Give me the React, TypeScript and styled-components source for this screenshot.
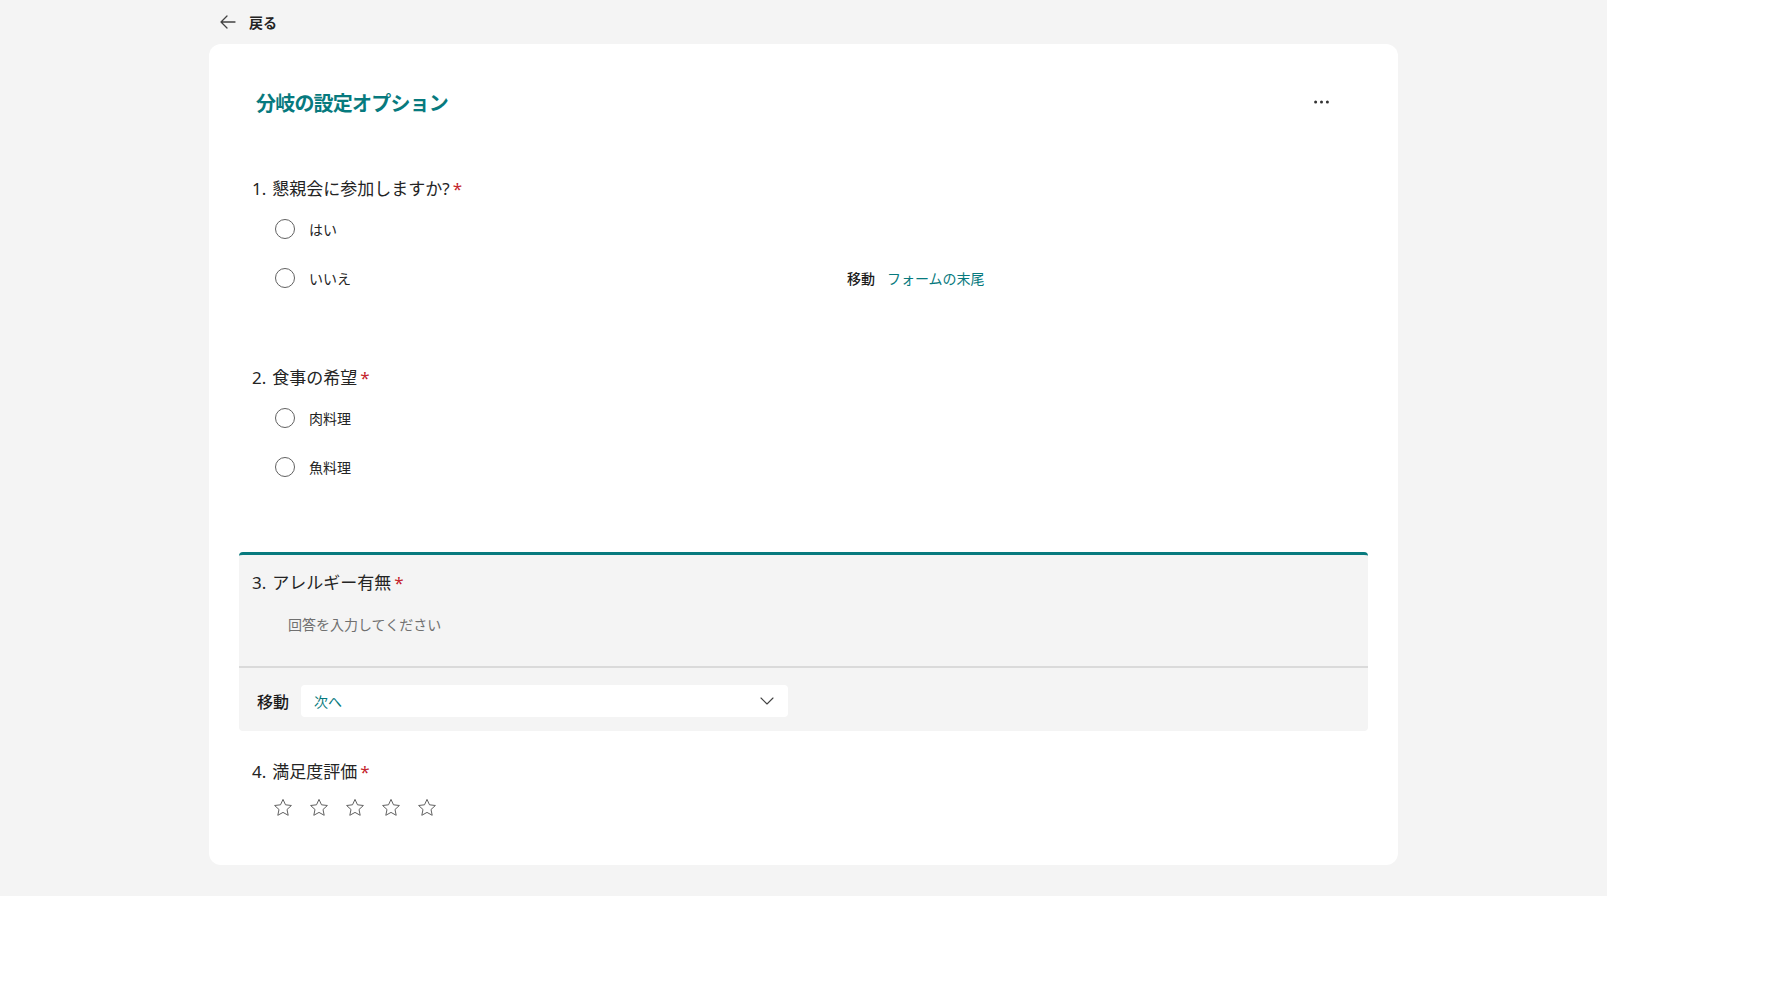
import React from 'react';
import styled, {createGlobalStyle} from 'styled-components';

const teal = '#077a7e';
const ink = '#242424';

const GlobalStyle = createGlobalStyle`
    html, body {
        margin: 0;
        padding: 0;
        background: #ffffff;
    }
    body {
        font-family: "Noto Sans", "Noto Sans CJK JP", sans-serif;
        color: ${ink};
    }
`;

const Page = styled.div`
    width: 1607px;
    background: #f4f4f4;
    padding-bottom: 31px;
`;

const Column = styled.div`
    width: 1189px;
    margin: 0 auto;
`;

const BackBar = styled.div`
    height: 44px;
    display: flex;
    align-items: center;
    gap: 13px;
    padding-left: 11px;
    font-size: 14px;
    font-weight: 700;
    color: ${ink};
`;

const Card = styled.div`
    background: #ffffff;
    border-radius: 12px;
    padding: 0 30px;
`;

const Header = styled.div`
    height: 36px;
    padding: 42px 39px 0 17px;
    margin-bottom: 36px;
    display: flex;
    align-items: center;
    justify-content: space-between;
`;

const Title = styled.h1`
    margin: 0;
    font-size: 20px;
    line-height: 36px;
    font-weight: 700;
    color: ${teal};
    letter-spacing: -0.8px;
`;

const Question = styled.div<{ $active?: boolean }>`
    border-top: 3px solid ${p => (p.$active ? teal : 'transparent')};
    border-radius: 4px;
    background: ${p => (p.$active ? '#f4f4f4' : 'transparent')};
    padding: ${p => (p.$active ? '0' : '16px 13px 49px')};
    margin: ${p => (p.$active ? '16px 0 10px' : '0')};
    &:last-child {
        padding-bottom: 45px;
    }
`;

const QuestionBody = styled.div`
    padding: 16px 13px 25px;
    border-bottom: 2px solid #dadada;
`;

const QTitle = styled.div`
    font-size: 17px;
    line-height: 24px;
    color: ${ink};
`;

const Num = styled.span`
    margin-right: 6px;
`;

const Required = styled.span`
    color: #c4262e;
    margin-left: 3px;
`;

const Options = styled.div`
    margin: 8px 0 0 23px;
    display: flex;
    flex-direction: column;
    gap: 9px;
`;

const OptionRow = styled.div`
    height: 40px;
    display: grid;
    grid-template-columns: 572px auto;
    align-items: center;
`;

const OptionLabel = styled.label`
    display: flex;
    align-items: center;
    gap: 14px;
    font-size: 14px;
    color: ${ink};
`;

const Radio = styled.span`
    width: 18px;
    height: 18px;
    border: 1px solid #616161;
    border-radius: 50%;
    background: #ffffff;
`;

const Branch = styled.div`
    display: flex;
    align-items: center;
    gap: 12px;
    font-size: 14px;
`;

const BranchLabel = styled.span`
    font-weight: 500;
    color: #1b1b1b;
`;

const BranchTarget = styled.span`
    color: ${teal};
`;

const TextInput = styled.div`
    margin: 12px 0 0 23px;
    height: 34px;
    padding-left: 13px;
    display: flex;
    align-items: center;
    font-size: 14px;
    color: #707070;
`;

const Footer = styled.div`
    padding: 17px 18px 14px;
    display: flex;
    align-items: center;
    gap: 12px;
`;

const Select = styled.div`
    width: 487px;
    height: 32px;
    box-sizing: border-box;
    padding: 0 14px 0 13px;
    background: #ffffff;
    border-radius: 4px;
    display: flex;
    align-items: center;
    justify-content: space-between;
    font-size: 14px;
    color: ${teal};
`;

const Stars = styled.div`
    margin: 12px 0 0 21px;
    height: 24px;
    display: flex;
    align-items: center;
    gap: 16px;
`;

const IconButton = styled.button`
    border: none;
    background: none;
    padding: 0;
    margin-bottom: 4px;
    display: flex;
    align-items: center;
    cursor: pointer;
`;

const BackArrow = () => (
    <svg width="16" height="14" viewBox="0 0 16 14" fill="none">
        <path d="M7 1L1 7l6 6M1 7h14" stroke="#424242" strokeWidth="1.3" strokeLinecap="round" strokeLinejoin="round"/>
    </svg>
);

const Dots = () => (
    <svg width="15" height="4" viewBox="0 0 15 4">
        <circle cx="1.6" cy="2" r="1.5" fill="#333"/>
        <circle cx="7.5" cy="2" r="1.5" fill="#333"/>
        <circle cx="13.4" cy="2" r="1.5" fill="#333"/>
    </svg>
);

const Chevron = () => (
    <svg width="14" height="8" viewBox="0 0 14 8" fill="none">
        <path d="M1 1l6 6 6-6" stroke="#424242" strokeWidth="1.1" strokeLinecap="round" strokeLinejoin="round"/>
    </svg>
);

const Star = () => (
    <svg width="20" height="20" viewBox="0 0 20 20" fill="none">
        <path
            d="M10 1.4l2.5 5.4 5.9.7-4.4 4 1.2 5.8L10 14.4l-5.2 2.9 1.2-5.8-4.4-4 5.9-.7z"
            stroke="#616161"
            strokeWidth="1"
            strokeLinejoin="round"
        />
    </svg>
);

type Option = { label: string; branch?: string };

const ChoiceQuestion: React.FC<{ no: number; title: string; options: Option[] }> = ({no, title, options}) => (
    <Question>
        <QTitle><Num>{no}.</Num>{title}<Required>*</Required></QTitle>
        <Options>
            {options.map(o => (
                <OptionRow key={o.label}>
                    <OptionLabel><Radio/>{o.label}</OptionLabel>
                    {o.branch && (
                        <Branch>
                            <BranchLabel>移動</BranchLabel>
                            <BranchTarget>{o.branch}</BranchTarget>
                        </Branch>
                    )}
                </OptionRow>
            ))}
        </Options>
    </Question>
);

export default function App() {
    return (
        <Page>
            <GlobalStyle/>
            <Column>
                <BackBar>
                    <BackArrow/>
                    <span>戻る</span>
                </BackBar>
                <Card>
                    <Header>
                        <Title>分岐の設定オプション</Title>
                        <IconButton aria-label="その他"><Dots/></IconButton>
                    </Header>

                    <ChoiceQuestion
                        no={1}
                        title="懇親会に参加しますか?"
                        options={[{label: 'はい'}, {label: 'いいえ', branch: 'フォームの末尾'}]}
                    />
                    <ChoiceQuestion
                        no={2}
                        title="食事の希望"
                        options={[{label: '肉料理'}, {label: '魚料理'}]}
                    />

                    <Question $active>
                        <QuestionBody>
                            <QTitle><Num>3.</Num>アレルギー有無<Required>*</Required></QTitle>
                            <TextInput>回答を入力してください</TextInput>
                        </QuestionBody>
                        <Footer>
                            <BranchLabel>移動</BranchLabel>
                            <Select>
                                <span>次へ</span>
                                <Chevron/>
                            </Select>
                        </Footer>
                    </Question>

                    <Question>
                        <QTitle><Num>4.</Num>満足度評価<Required>*</Required></QTitle>
                        <Stars>
                            {[0, 1, 2, 3, 4].map(i => <Star key={i}/>)}
                        </Stars>
                    </Question>
                </Card>
            </Column>
        </Page>
    );
}
